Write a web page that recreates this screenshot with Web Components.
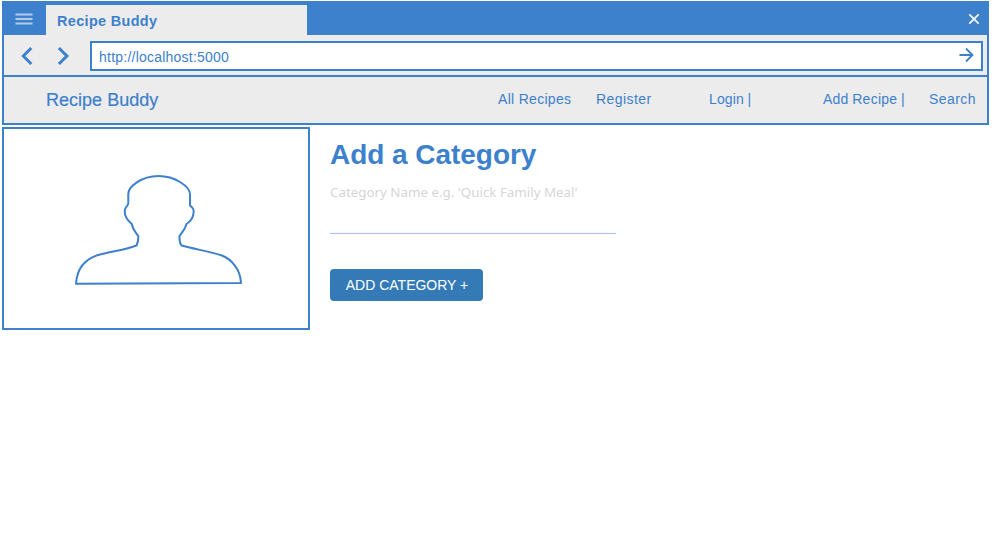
<!DOCTYPE html>
<html lang="en"><head><meta charset="utf-8"><title>Recipe Buddy</title>
<style>
html,body{margin:0;background:#fff}
body{height:553px;overflow:hidden;font-family:"Liberation Sans",Arial,sans-serif;color:#3d80cc;--blue:#3d80cc;--bar:#ececec}
</style></head><body>
<recipe-page></recipe-page>
<script>
const define=(name,html)=>customElements.define(name,class extends HTMLElement{
  constructor(){super();this.attachShadow({mode:'open'}).innerHTML=html;}
});
define('title-bar',`<style>
:host{display:flex;height:34px;background:var(--blue);align-items:flex-end}
.menu{width:44px;height:34px;flex:none}
.tab{width:261px;height:30px;background:var(--bar);box-sizing:border-box;padding-left:11px;font:bold 14.4px/32px "Liberation Sans",sans-serif;letter-spacing:.37px;white-space:nowrap}
.close{margin-left:auto;width:30px;height:34px}
svg{display:block}
</style><div class="menu"><svg width="44" height="34"><path d="M13.5 13.5h17M13.5 18h17M13.5 22.5h17" stroke="#b1cceb" stroke-width="1.8"/></svg></div>
<div class="tab"><slot></slot></div>
<div class="close"><svg width="30" height="34"><path d="M10.3 13.3l9.4 9.4M19.7 13.3l-9.4 9.4" stroke="#fff" stroke-width="1.7"/></svg></div>`);
define('address-bar',`<style>
:host{display:flex;height:40px;box-sizing:border-box;border-inline:2px solid var(--blue);padding:6px 4px 4px 0;background:var(--bar)}
svg{display:block;flex:none}
.url{flex:1;height:30px;box-sizing:border-box;border:2px solid var(--blue);background:#fff;display:flex;padding-left:7px;font-size:14px;line-height:29px;letter-spacing:.23px}
.go{margin-left:auto}
</style><svg width="86" height="30" fill="none" stroke="#3d80cc" stroke-width="3"><path d="M27.3 7L19.300 15l8 8M54.900 7l8 8-8 8"/></svg>
<div class="url"><slot></slot><svg class="go" width="30" height="26" fill="none" stroke="#3d80cc" stroke-width="1.8"><path d="M8.500 12h13M15 5.500l6.500 6.500-6.500 6.500"/></svg></div>`);
define('nav-bar',`<style>
:host{display:block;height:50px;box-sizing:border-box;border:2px solid var(--blue);background:var(--bar)}
nav{display:grid;grid-template-columns:452px 98px 113px 114px 106px 1fr;padding-left:42px;white-space:nowrap;font-size:14px;line-height:44px;letter-spacing:.3px}
b{font-weight:400;font-size:18px;line-height:46px;letter-spacing:.02px;-webkit-text-stroke:.2px currentColor}
.wide{letter-spacing:.42px}
.login{letter-spacing:.15px;word-spacing:-.5px}
.add{letter-spacing:.24px;word-spacing:-.5px}
</style><nav><b>Recipe Buddy</b><span>All Recipes</span><span class="wide">Register</span><span class="login">Login |</span><span class="add">Add Recipe |</span><span class="wide">Search</span></nav>`);
define('browser-window',`<style>:host{display:block;width:987px}</style>
<title-bar>Recipe Buddy</title-bar><address-bar>http://localhost:5000</address-bar><nav-bar></nav-bar>`);
define('profile-picture',`<style>:host{display:block;width:308px;height:203px;box-sizing:border-box;border:2px solid var(--blue)}svg{display:block}</style>
<svg width="304" height="199" viewBox="4 129 304 199" fill="none" stroke="#3d80cc" stroke-width="2" stroke-linejoin="round"><path d="M76 283.800C77 268 86 257.500 102 254C114 251 127 249.500 136.500 245.500C138 242 138.500 239 138.300 236C135.500 232 132.700 230 131.700 224C127.500 220 124.700 217 124.700 211C124.500 207 128.300 206.500 128.300 203V194C128.300 187 141 176 158.500 176C175 176 190 186.500 190 194.500V205.500C192 207 193.800 208.500 193.700 211.500C193.500 217 191.500 221 186.500 224C185 230 182 232.500 179.500 236C179.300 240 179.500 243 181.500 245.500C194 249 210 251.500 222 255.500C231 259 240.500 269 241 282.900Z"/></svg>`);
define('category-form',`<style>
:host{display:flex;flex-direction:column;align-items:flex-start;padding-top:10px}
h1{margin:0;font-size:28px;line-height:36px;letter-spacing:-.04px;white-space:nowrap}
.field{width:286px;height:61px;box-sizing:border-box;border-bottom:1px solid #a9bffb;font:13.35px/38px "Noto Sans",sans-serif;color:#d6d6d6;white-space:nowrap}
button{margin:35px 0 0;padding:0 0 0 1px;width:153px;height:32px;border:0;border-radius:4px;background:#337ab7;color:#fff;font:14px "Liberation Sans",sans-serif;white-space:nowrap}
</style><h1>Add a Category</h1><div class="field">Category Name e.g. 'Quick Family Meal'</div><button>ADD CATEGORY +</button>`);
define('recipe-page',`<style>:host{display:flex;flex-direction:column;gap:2px;padding:1px 0 0 2px}main{display:flex;gap:20px}</style>
<browser-window></browser-window><main><profile-picture></profile-picture><category-form></category-form></main>`);
</script></body></html>
